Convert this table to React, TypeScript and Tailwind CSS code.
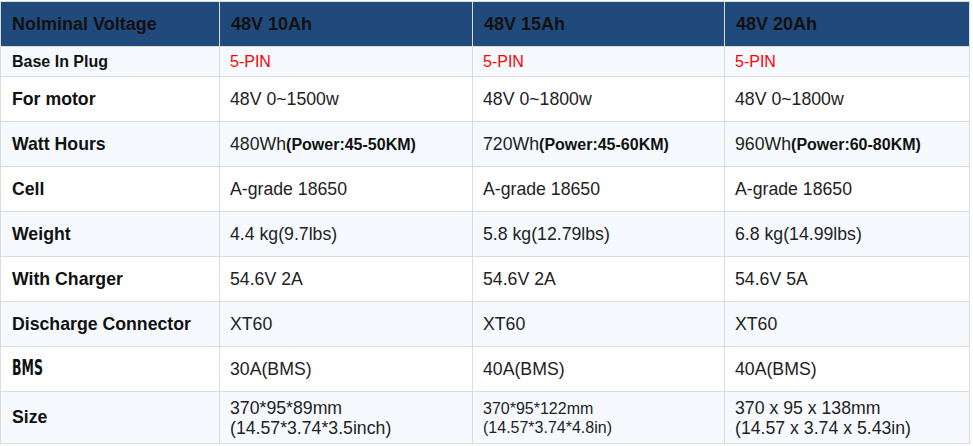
import React from 'react';

type Row = {
  label: React.ReactNode;
  cells: React.ReactNode[];
  height: string;
  shaded: boolean;
};

const power = (wh: string, range: string) => (
  <>
    {wh}
    <span className="text-[16px] font-bold text-[#111]">(Power:{range})</span>
  </>
);

const rows: Row[] = [
  {
    label: <span className="text-[16px]">Base In Plug</span>,
    cells: ['5-PIN', '5-PIN', '5-PIN'].map((t, i) => (
      <span key={i} className="text-[16px] text-[#ff0000]">{t}</span>
    )),
    height: 'h-[30px]',
    shaded: true,
  },
  { label: 'For motor', cells: ['48V 0~1500w', '48V 0~1800w', '48V 0~1800w'], height: 'h-[45px]', shaded: false },
  {
    label: 'Watt Hours',
    cells: [power('480Wh', '45-50KM'), power('720Wh', '45-60KM'), power('960Wh', '60-80KM')],
    height: 'h-[45px]',
    shaded: true,
  },
  { label: 'Cell', cells: ['A-grade 18650', 'A-grade 18650', 'A-grade 18650'], height: 'h-[45px]', shaded: false },
  { label: 'Weight', cells: ['4.4 kg(9.7lbs)', '5.8 kg(12.79lbs)', '6.8 kg(14.99lbs)'], height: 'h-[45px]', shaded: true },
  { label: 'With Charger', cells: ['54.6V 2A', '54.6V 2A', '54.6V 5A'], height: 'h-[45px]', shaded: false },
  { label: 'Discharge Connector', cells: ['XT60', 'XT60', 'XT60'], height: 'h-[45px]', shaded: true },
  {
    label: (
      <span
        className="inline-block origin-left scale-x-[0.66] text-[21px] font-extrabold leading-none"
        style={{ fontFamily: '"DejaVu Sans Condensed", "DejaVu Sans", sans-serif' }}
      >
        BMS
      </span>
    ),
    cells: ['30A(BMS)', '40A(BMS)', '40A(BMS)'],
    height: 'h-[45px]',
    shaded: false,
  },
  {
    label: 'Size',
    cells: [
      <span key="a" className="block leading-[20px]">
        370*95*89mm
        <br />
        (14.57*3.74*3.5inch)
      </span>,
      <span key="b" className="block text-[16px] leading-[19px]">
        370*95*122mm
        <br />
        (14.57*3.74*4.8in)
      </span>,
      <span key="c" className="block leading-[20px]">
        370 x 95 x 138mm
        <br />
        (14.57 x 3.74 x 5.43in)
      </span>,
    ],
    height: 'h-[52px]',
    shaded: true,
  },
];

const headers = ['Nolminal Voltage', '48V 10Ah', '48V 15Ah', '48V 20Ah'];

export default function App() {
  return (
    <div className="w-[973px] h-[446px] bg-white pt-px" style={{ fontFamily: '"Liberation Sans", Arial, sans-serif' }}>
      <table className="w-[969px] table-fixed border-collapse border border-[#dcdcdc]">
        <colgroup>
          <col className="w-[219px]" />
          <col className="w-[253px]" />
          <col className="w-[252px]" />
          <col className="w-[245px]" />
        </colgroup>
        <thead>
          <tr className="h-[45px] bg-[#214a7c]">
            {headers.map((h) => (
              <th
                key={h}
                className="border border-[#dcdcdc] px-[11px] text-left text-[18px] font-bold text-[#111]"
              >
                {h}
              </th>
            ))}
          </tr>
        </thead>
        <tbody>
          {rows.map((r, i) => (
            <tr key={i} className={`${r.height} ${r.shaded ? 'bg-[#f6faff]' : 'bg-white'}`}>
              <td className="border border-[#dcdcdc] px-[11px] text-[17.7px] font-bold text-[#111]">{r.label}</td>
              {r.cells.map((c, j) => (
                <td key={j} className="border border-[#dcdcdc] px-[10px] text-[17.7px] text-[#222]">
                  {c}
                </td>
              ))}
            </tr>
          ))}
        </tbody>
      </table>
    </div>
  );
}
